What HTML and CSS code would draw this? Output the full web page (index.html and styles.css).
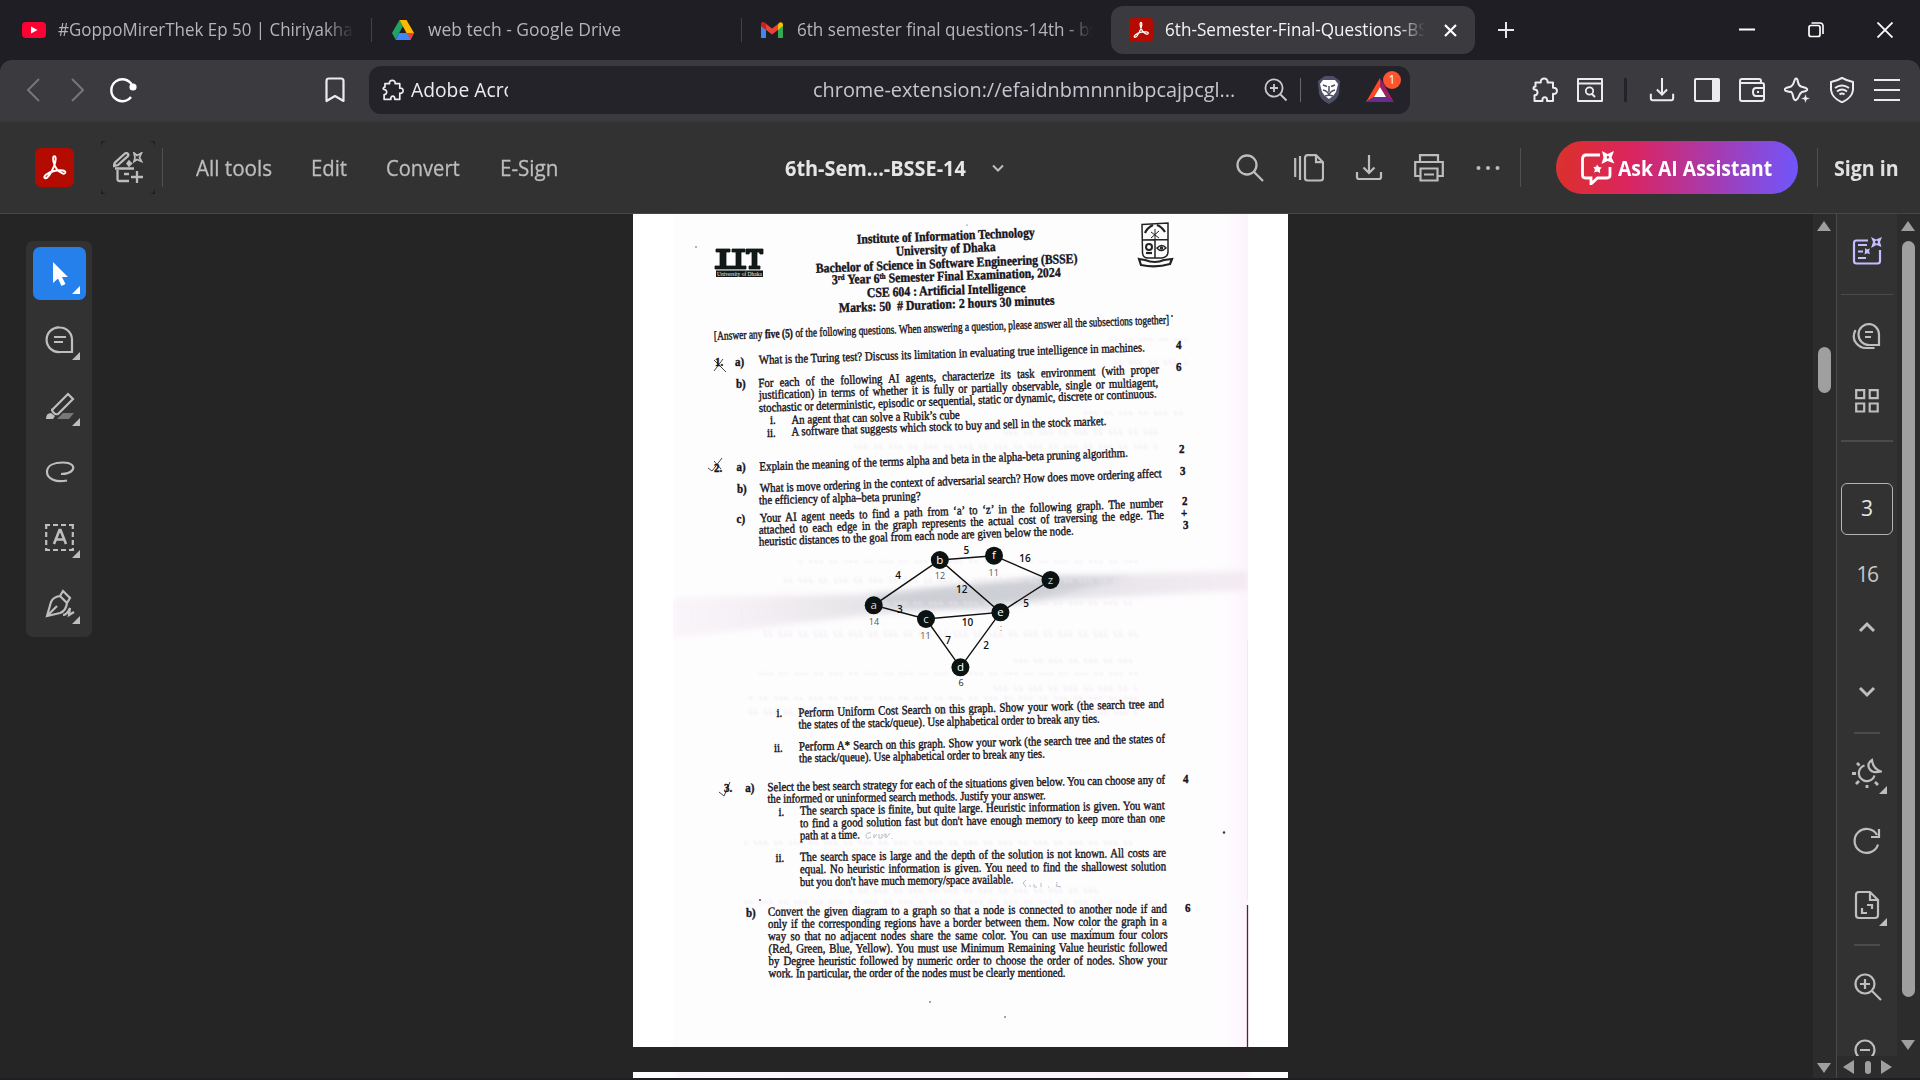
FILE: index.html
```html
<!DOCTYPE html>
<html lang="en">
<head>
<meta charset="utf-8">
<title>6th-Semester-Final-Questions-BSSE-14</title>
<link rel="stylesheet" href="styles.css">
</head>
<body>
<svg class="defs" width="0" height="0">
  <symbol id="adobe" viewBox="0 0 24 24"><path d="M11.6 4.500c1.600-.6 1.600 3.200-.2 7.200-1.500 3.500-4.200 8-5.800 7.500-1.700-.8 1.700-4 6.800-5 3.900-.7 7.200-.3 6.900 1.200-.5 1.700-3.700.3-5.900-2.500-2-2.600-3-7.700-1.800-8.400z" fill="none" stroke="#fff" stroke-width="1.300"/></symbol>
  <symbol id="puzzle" viewBox="0 0 26 26"><path d="M3.500 5.500h5.300C7.800.3 16.500.3 15.500 5.500H21v5.300c5.300-1 5.300 7 0 6V24h-6c1-5-5.500-5-4.500 0H2.500v-5.700c4 .5 4-6.300 0-5.800-1.500 0-1.500-3 1-3z" fill="none" stroke="currentColor" stroke-width="2" stroke-linejoin="round"/></symbol>
  <symbol id="download" viewBox="0 0 28 28"><path d="M14 1v18M8.500 13.500l5.500 5.500 5.500-5.500M2 18v5q0 2 2 2h20q2 0 2-2v-5" fill="none" stroke="currentColor" stroke-width="2.200"/></symbol>
</svg>

<header class="tabs">
  <div class="tab t1">
    <svg width="24" height="16" viewBox="0 0 24 16"><rect width="24" height="16" rx="4" fill="#ff0033"/><path d="M9 4.500v7l6.500-3.500z" fill="#fff"/></svg>
    <span class="clip c1 fade"><span class="fit" data-w="305">#GoppoMirerThek Ep 50 | Chiriyakhan</span></span>
  </div>
  <div class="tab t2">
    <svg width="22" height="20" viewBox="0 0 22 20"><path d="M7.500 0L0 13l3.500 6.500L11 6z" fill="#1fa463"/><path d="M7.500 0h7L22 13h-7.500z" fill="#ffba00"/><path d="M3.500 20L7 13h15l-3.500 7z" fill="#4285f4"/><path d="M14.800 13H22l-3.500 6.500z" fill="#ea4335"/></svg>
    <span class="clip c2"><span class="fit" data-w="193">web tech - Google Drive</span></span>
  </div>
  <div class="tab t3">
    <svg width="22" height="16" viewBox="0 0 22 16"><path d="M0 2v14h5V6z" fill="#4285f4"/><path d="M22 2v14h-5V6z" fill="#34a853"/><path d="M17 2.500V8l5-4V2q-1-3-4-1.200z" fill="#fbbc04"/><path d="M0 2v2l11 8.500L17 8V2l-6 4.500L4 1Q1-1 0 2z" fill="#ea4335"/><path d="M0 2v2l5 4V2Q1-2 0 2z" fill="#c5221f"/></svg>
    <span class="clip c1 fade"><span class="fit" data-w="318">6th semester final questions-14th - bsse</span></span>
  </div>
  <div class="tab t4">
    <svg class="red" width="24" height="24"><use href="#adobe"/></svg>
    <span class="clip c4 fade"><span class="fit" data-w="272">6th-Semester-Final-Questions-BSS</span></span>
    <svg width="13" height="13" viewBox="0 0 13 13"><path d="M1 1l11 11M12 1L1 12" stroke="#fff" stroke-width="2.200"/></svg>
  </div>
  <svg class="plus" width="16" height="16" viewBox="0 0 16 16"><path d="M8 0v16M0 8h16" stroke="#e8e8ea" stroke-width="2"/></svg>
  <div class="winctl">
    <svg width="16" height="16" viewBox="0 0 16 16"><path d="M0 7.500h16" stroke="#fff" stroke-width="2"/></svg>
    <svg width="16" height="16" viewBox="0 0 16 16"><rect x="1" y="3.500" width="11" height="11" rx="2" fill="none" stroke="#fff" stroke-width="1.700"/><path d="M3.500 1H12q3 0 3 3v8" fill="none" stroke="#fff" stroke-width="1.600"/></svg>
    <svg width="16" height="16" viewBox="0 0 16 16"><path d="M.5.5l15 15M15.500.5l-15 15" stroke="#fff" stroke-width="1.800"/></svg>
  </div>
</header>

<nav class="toolbar">
  <svg class="back" width="14" height="24" viewBox="0 0 14 24"><path d="M13 1L2 12l11 11" fill="none" stroke="#77767b" stroke-width="2"/></svg>
  <svg class="fwd" width="14" height="24" viewBox="0 0 14 24"><path d="M1 1l11 11L1 23" fill="none" stroke="#77767b" stroke-width="2"/></svg>
  <svg class="reload" width="28" height="26" viewBox="0 0 28 26"><path d="M22 20A11 11 0 1 1 23 8" fill="none" stroke="#fff" stroke-width="2.400"/><circle cx="24" cy="10" r="3.600" fill="#fff"/></svg>
  <svg class="mark" width="20" height="26" viewBox="0 0 20 26"><path d="M1.500 4q0-2.500 2.500-2.500h12q2.500 0 2.500 2.500v20L10 19l-8.500 5z" fill="none" stroke="#ececf0" stroke-width="2.200" stroke-linejoin="round"/></svg>
  <div class="url">
    <svg class="lt" width="22" height="22"><use href="#puzzle"/></svg>
    <span class="clip acr"><span class="fit" data-w="134">Adobe Acrobat</span></span>
    <span class="clip addr"><span class="fit" data-w="422">chrome-extension://efaidnbmnnnibpcajpcgl...</span></span>
    <svg class="mag" width="24" height="24" viewBox="0 0 24 24"><circle cx="10" cy="10" r="8.600" fill="none" stroke="#c9c9cf" stroke-width="1.800"/><path d="M10 6v8M6 10h8M16.500 16.500l6 6" stroke="#c9c9cf" stroke-width="1.800"/></svg>
    <i class="usep"></i>
    <svg class="lion" width="24" height="28" viewBox="0 0 24 28"><path d="M5 2l3-2h8l3 2 4 3-1 13q-2 6-10 10Q4 24 2 18L1 5z" fill="#4c4f66"/><path d="M6 4h12l3 4-2 8-3 4-4 3-4-3-3-4-2-8z" fill="#fff"/><path d="M6 9l4 1.500M18 9l-4 1.500M12 10v6M9 15l3 3 3-3M8 20l4-1 4 1M6 14l3 1M18 14l-3 1" fill="none" stroke="#4c4f66" stroke-width="1.500"/></svg>
    <div class="bat">
      <svg width="28" height="24" viewBox="0 0 28 24"><path d="M14 0v9L8 19 0 24z" fill="#ff4724"/><path d="M14 0l14 24-8-5-6-10z" fill="#9e1f63"/><path d="M0 24l8-5h12l8 5z" fill="#662d91"/><path d="M14 9l6 10H8z" fill="#fff"/></svg>
      <b>1</b>
    </div>
  </div>
  <div class="tools">
    <svg class="t26" viewBox="0 0 26 26"><use href="#puzzle"/></svg>
    <svg class="t26" viewBox="0 0 26 26"><path d="M1 2h24v22H1zM1 6.500h24" fill="none" stroke="currentColor" stroke-width="2" stroke-linejoin="round"/><circle cx="12.500" cy="14" r="3.700" fill="none" stroke="currentColor" stroke-width="1.800"/><path d="M15 17l3 3" stroke="currentColor" stroke-width="2"/></svg>
    <i class="tsep"></i>
    <svg class="t26" viewBox="0 0 28 28"><use href="#download"/></svg>
    <svg class="t26" viewBox="0 0 26 26"><rect x="1" y="2" width="24" height="22" rx="1" fill="none" stroke="currentColor" stroke-width="2"/><path d="M18 2h7v22h-7z" fill="currentColor"/></svg>
    <svg class="t26" viewBox="0 0 26 26"><path d="M22 6V4q0-2-2-2H3q-2 0-2 2v18q0 2 2 2h20q2 0 2-2V8q0-2-2-2H2M25 11h-8q-3 0-3 4t3 4h8M18 15h2" fill="none" stroke="currentColor" stroke-width="2"/></svg>
    <svg class="t26" viewBox="0 0 26 26"><path d="M12 1.500q1.500 0 2 3.500t3 4.500l5 1.500q2.500 1.500 0 3l-4 1q-2 1-3 4t-3 4-3-4-3-4l-4-1q-2.500-1.500 0-3l5-1.500q2-1 3-4.500t2-3.500z" fill="none" stroke="currentColor" stroke-width="2" stroke-linejoin="round"/><path d="M21.500 16.500l1.300 3.700 3.700 1.300-3.700 1.300-1.300 3.700-1.300-3.700-3.700-1.300 3.700-1.300z" fill="currentColor" stroke="#3b3a3f" stroke-width=".6"/></svg>
    <svg class="t26" viewBox="0 0 26 26"><path d="M13 .8q4 2.500 11 4.200v8q-1 8-11 12.300Q3 21 2 13V5Q9 3.500 13 .8z" fill="none" stroke="currentColor" stroke-width="2"/><path d="M6 11q7-5 14 0M8 14.500q5-4 10 0M10.500 17.500q2.500-2 5 0" fill="none" stroke="currentColor" stroke-width="1.900"/></svg>
    <svg class="t26" viewBox="0 0 26 26"><path d="M0 3h26M0 13h26M0 23h26" stroke="currentColor" stroke-width="2"/></svg>
  </div>
</nav>

<div class="acrobar">
  <svg class="logo" width="39" height="39" viewBox="0 0 24 24"><use href="#adobe" x="1" y="1" width="22" height="22"/></svg>
  <div class="newwrap"><div class="newbtn"><svg width="30" height="31" viewBox="0 0 30 31" fill="none" stroke="currentColor" stroke-width="2.300"><path d="M1 14q0-3 2-4.500L12 1.500q2-1 3 .5t-1 3L5 13l-4 1zM2 16.500h19M4.500 18v9q0 2 2 2H16M11 22h5M24 19v12M18 25h12"/><path d="M21 1l3 2.500L28.500 1l-2 4.500 2 4-4.500-2-3 2 1-4z" stroke-width="1.700"/><path d="M16 9.500l2 2-2 2-1.500-2z" fill="currentColor"/></svg></div></div>
  <i class="asep s1"></i>
  <span class="clip m1"><span class="fit" data-w="76">All tools</span></span>
  <span class="clip m2"><span class="fit" data-w="36">Edit</span></span>
  <span class="clip m3"><span class="fit" data-w="74">Convert</span></span>
  <span class="clip m4"><span class="fit" data-w="58">E-Sign</span></span>
  <span class="clip m5"><span class="fit" data-w="181">6th-Sem...-BSSE-14</span></span>
  <svg class="chev" width="12" height="8" viewBox="0 0 12 8"><path d="M1 1.500l5 5 5-5" fill="none" stroke="currentColor" stroke-width="2"/></svg>
  <div class="acts">
    <svg width="28" height="28" viewBox="0 0 28 28" fill="none" stroke="currentColor" stroke-width="2.300"><circle cx="11" cy="11" r="9.500"/><path d="M18 18l9 9"/></svg>
    <svg width="30" height="28" viewBox="0 0 30 28" fill="none" stroke="currentColor" stroke-width="2.200"><path d="M1.200 4v19M6 2v24M13.500 1.200H22l7 7V24q0 2.500-2.500 2.500h-13Q11 26.500 11 24V4q0-2.800 2.500-2.800zM22 1.200v7h7"/></svg>
    <svg width="28" height="28"><use href="#download"/></svg>
    <svg width="30" height="28" viewBox="0 0 30 28" fill="none" stroke="currentColor" stroke-width="2.200"><path d="M6 7V1.200h18V7M6 22H1.200V8h27.600v14H24M6.500 14.500h17v12h-17zM10 20.500h10"/></svg>
    <svg width="24" height="6" viewBox="0 0 24 6" fill="currentColor"><circle cx="2.500" cy="3" r="2"/><circle cx="12" cy="3" r="2"/><circle cx="21.500" cy="3" r="2"/></svg>
  </div>
  <i class="asep s2"></i>
  <div class="ai">
    <svg width="34" height="34" viewBox="0 0 34 34"><path d="M19 4H5Q1.500 4 1.500 8v16q0 3 3 3H10v6l6.500-6H26q3 0 3-3V16" fill="none" stroke="#fff" stroke-width="2.800"/><path d="M21 0l5.500 3L33 0l-2.500 6.500 3 6-7-2.500-6 3 2-6.500z" fill="#fff"/><path d="M27 4.500l1.500 2-2 1.500-1-2z" fill="#d8316b"/><path d="M16 13.500l1.800 2.500 3 .5-2 2.200.3 3.300-3-1.500-3 1 .8-3-1.500-2.500 2.800-.3z" fill="#fff"/></svg>
    <span class="clip m6"><span class="fit" data-w="154">Ask AI Assistant</span></span>
  </div>
  <i class="asep s3"></i>
  <span class="clip m7"><span class="fit" data-w="65">Sign in</span></span>
</div>

<main class="viewer">
  <aside class="palette">
    <div class="pt on"><svg width="30" height="30" viewBox="0 0 30 30"><path d="M8 3v21l5-4.500 3.500 7.500 4-2-3.500-7h6z" fill="#fff"/></svg><i></i></div>
    <div class="pt"><svg width="30" height="30" viewBox="0 0 30 30"><path d="M15 2.500A12.300 12.300 0 1 0 15 27h12V15A12.300 12.300 0 0 0 15 2.500zM9 12h12M9 17h9"/></svg><i></i></div>
    <div class="pt"><svg width="30" height="30" viewBox="0 0 30 30"><path d="M8 18L23 3l5 5-15 15q-3 1-5-2t0-3z"/><path d="M1 28q0-6 5-6l4 3-2 3z" fill="currentColor" stroke="none"/><path d="M12 28l6-6h11l-5 6z" fill="#777" stroke="none"/></svg><i></i></div>
    <div class="pt no"><svg width="30" height="30" viewBox="0 0 30 30"><path d="M22 23.500C10 26 2 21 2 15 2 8 10 5.500 18 5.500S30 9 27.500 13q-3 4-11.500 4"/></svg></div>
    <div class="pt"><svg width="30" height="30" viewBox="0 0 30 30"><path d="M0 2h29M0 27h29" stroke-dasharray="5 3"/><path d="M1.200 1v27M27.800 1v27" stroke-dasharray="5 3"/><path d="M9 21l5.500-14h1L21 21M11 16.500h8" stroke-width="2.600"/></svg><i></i></div>
    <div class="pt"><svg width="30" height="30" viewBox="0 0 30 30"><path d="M18 2l7 7-3 5q-1 8-7 10L2 27l4-14q2-5 9-6zM15 7l7 7M2 27l10-10M18 26q4 0 7-7l-1 7 5-3"/></svg><i></i></div>
  </aside>

  <div class="pages">
    <svg class="page" id="paper" width="655" height="833" viewBox="633 214 655 833">
      <defs>
        <linearGradient id="band" x1="0" x2="1" y1="0" y2="0"><stop offset="0" stop-color="#f3e8f3" stop-opacity=".6"/><stop offset=".3" stop-color="#dedae0"/><stop offset=".45" stop-color="#cccdd4"/><stop offset=".65" stop-color="#d3d3da"/><stop offset="1" stop-color="#ebdfe9" stop-opacity=".8"/></linearGradient>
        <linearGradient id="edge" x1="0" x2="1" y1="0" y2="0"><stop offset="0" stop-color="#fdf8fd" stop-opacity="0"/><stop offset="1" stop-color="#fcf4fb"/></linearGradient>
        <filter id="soft" x="-10%" y="-30%" width="120%" height="160%"><feGaussianBlur stdDeviation="3"/></filter>
        <filter id="haze" x="-5%" y="-5%" width="110%" height="110%"><feGaussianBlur stdDeviation=".8"/></filter>
        <clipPath id="scan"><rect x="673" y="214" width="575" height="833"/></clipPath>
      </defs>
      <rect x="673" y="214" width="575" height="833" fill="#fefdfe"/>
      <g clip-path="url(#scan)">
        <rect x="1218" y="214" width="30" height="833" fill="url(#edge)"/>
        <path d="M673 598L860 594 1050 576 1248 571V590L1020 602 860 616 673 638z" fill="url(#band)" opacity=".65" filter="url(#soft)"/>
        <path d="M870 596L1050 577 1130 578 1050 596 990 610 880 606z" fill="#b9bdc5" opacity=".45" filter="url(#soft)"/>
        <path d="M690 1043h558" stroke="#faeff9" stroke-width="8" filter="url(#soft)"/>
      </g>
      <g id="ghost" filter="url(#haze)"></g>
      <path d="M1247.500 640V900" stroke="#f6e6f2"/><path d="M1247.500 905V1047" stroke="#6a1a30" stroke-width="1.300"/>
      <g fill="#101818"><path d="M716 249h14v3h-4v14h5v3h-16v-3h5v-14h-4zM732 249h13v3h-4v14h5v3h-15v-3h5v-14h-4zM746 249h17v5h-3l-1-2h-2v14h3v3h-11v-3h3v-14h-2l-1 2h-3z" stroke="#101818" stroke-width=".8"/><rect x="716" y="270.500" width="47" height="6.500"/></g>
      <text x="717" y="276" font-size="6" fill="#eee" textLength="45" lengthAdjust="spacingAndGlyphs">University of Dhaka</text>
      <g fill="none" stroke="#222" stroke-width="1.500"><path d="M1142 224.500l26-1.500v29q0 5-6 6h-14q-5 0-5.500-5zM1142 240l26-.5M1155 240v18"/><path d="M1145 233q2-5 8-8M1165 232q-3-5-8-7" stroke-width="2.200"/><path d="M1155 229v11M1151 232l8 6M1159 231l-8 7" stroke-width="1"/><circle cx="1149" cy="247" r="3" stroke-width="2"/><path d="M1146 253h6" stroke-width="2.200"/><path d="M1157 248q5-5 9 0-5 5-9 0z"/><circle cx="1161.500" cy="248" r="1"/><path d="M1139 259l6 1q10 4 19 0l8-1-2 5q-14 4-29 1z" stroke-width="2.200"/></g>
      <g stroke="#111" stroke-width="1.400"><path d="M939.800 560L994 555.700 1050.500 580 1000.400 612.300 939.800 560 873.700 605.300 926 619 1000.400 612.300 960.400 667.300 926 619" fill="none"/></g>
      <g fill="#0a1212"><circle cx="939.800" cy="560" r="9"/><circle cx="994" cy="555.700" r="9"/><circle cx="1050.500" cy="580" r="9"/><circle cx="873.700" cy="605.300" r="9"/><circle cx="926" cy="619" r="9"/><circle cx="1000.400" cy="612.300" r="9"/><circle cx="960.400" cy="667.300" r="9"/></g>
      <g class="glabel" id="glabels"></g>
      <g fill="none" stroke="#444" stroke-width="1"><path d="M714 371l9-12M714 360l12 12M708 468l4 3 10-13M714 461l7 8M719 792l5 4 6-14"/></g>
      <g fill="none" stroke="#b4bcc6" stroke-width="1"><path d="M871 833q-5-1-5 3t5 1M874 834v4l3-4M879 834v4h3v-4M885 837q-3-3 1-3v4l4-5M892 838v1M1026 880l-3 3 3 4M1030 885v2M1034 884v3h3M1041 883v4M1048 887h1M1056 882q3 1 0 4l5 1"/></g>
      <g fill="#333"><circle cx="1172" cy="316" r="1"/><circle cx="1224" cy="832.500" r="1.200"/><circle cx="930" cy="1002" r=".8"/><circle cx="1005" cy="1017" r=".8"/><circle cx="760" cy="900" r=".9"/><circle cx="1092" cy="929" r=".8"/><circle cx="696" cy="247" r=".7"/><circle cx="967" cy="225" r=".6"/></g>
      <g id="lines"></g>
    </svg>
    <div class="next"></div>
  </div>

  <div class="vbar">
    <i class="up"></i><i class="thumb short"></i><i class="down low"></i>
  </div>

  <div class="railcol">
    <aside class="rail">
      <svg class="r1" width="30" height="30" viewBox="0 0 30 30"><path d="M16 4.500H4.500Q2 4.500 2 7v18q0 2.500 2.500 2.500h21Q28 27.500 28 25V14"/><path d="M6 9h9M6 15.500h5M6 22h8"/><path d="M19 1l5 2.500L30 1l-2 5 1.500 5-5-2-5.500 3 2-6zM13 12l2 1.500 3-1-1 2.500 1 3-3-.8-2.500 1.300.5-3z" fill="currentColor" stroke="none"/><circle cx="24.500" cy="6" r="1.500" fill="#323232" stroke="none"/></svg>
      <hr class="thin">
      <svg class="r2" width="30" height="30" viewBox="0 0 30 30"><path d="M17 3a10.500 10.500 0 0 0 0 21h10V13.500A10.500 10.500 0 0 0 17 3zM13 11h8M13 16h6M3.500 9q-4 8 1 13.500 4 4.500 9 4.500h9"/></svg>
      <svg class="r3" width="30" height="30" viewBox="0 0 30 30"><path d="M4.200 4.200h8v8h-8zM17.700 4.200h8v8h-8zM4.200 17.500h8v8h-8zM17.700 17.500h8v8h-8z"/></svg>
      <hr class="thick">
      <div class="pgbox">3</div>
      <div class="pgtot">16</div>
      <svg class="r4" width="18" height="12" viewBox="0 0 18 12"><path d="M2 10l7-7 7 7" stroke-width="3"/></svg>
      <svg class="r5" width="18" height="12" viewBox="0 0 18 12"><path d="M2 2l7 7 7-7" stroke-width="3"/></svg>
      <hr class="sm">
      <div class="rb r6"><svg width="30" height="30" viewBox="0 0 30 30"><path d="M12.500 7.500a8 8 0 1 0 10 10M20 2q-5 3-3 8 3 6 12 3.500Q21 11 20 2z"/><path d="M0 15.500h4M15 27v3M5 5l2.500 2.500M4 26l3-3M23 24l3 3" stroke-width="2.800"/></svg><i></i></div>
      <svg class="r7" width="30" height="30" viewBox="0 0 30 30"><path d="M26 18.500A12 12 0 1 1 25 9M27 3v8h-8"/></svg>
      <div class="rb r8"><svg width="30" height="30" viewBox="0 0 30 30"><path d="M7 2h11l8 8v15q0 3-3 3H7q-3 0-3-3V5q0-3 3-3zM18 2v8h8M15 15h5v4M10 18v5h5"/></svg><i></i></div>
      <hr class="sm s9">
      <svg class="r9" width="30" height="30" viewBox="0 0 30 30"><circle cx="13" cy="12" r="9.500"/><path d="M13 7v10M8 12h10M20 19l9 9"/></svg>
      <svg class="r10" width="30" height="30" viewBox="0 0 30 30"><circle cx="13" cy="12" r="9.500"/><path d="M8 12h10M20 19l9 9"/></svg>
    </aside>
    <div class="hbar"><i class="lft"></i><i class="dot"></i><i class="rgt"></i></div>
  </div>

  <div class="vbar outer">
    <i class="up"></i><i class="thumb long"></i><i class="down"></i>
  </div>
</main>
<script src="app.js"></script>
</body>
</html>
```
FILE: styles.css
```css
* { box-sizing: border-box; }
body { margin: 0; width: 1920px; height: 1080px; overflow: hidden; background: #1f1e24; font-family: "Open Sans", "Noto Sans", sans-serif; color: #c4c4c4; }
svg { display: block; flex: none; }
.defs { position: absolute; }
.fit { display: inline-block; white-space: nowrap; transform-origin: 0 50%; }
.clip { display: block; overflow: hidden; white-space: nowrap; flex: none; margin-bottom: 2px; }

/* tab strip */
.tabs { display: flex; align-items: center; height: 60px; background: #1f1e24; font-size: 18px; line-height: 26px; color: #b5b5b8; }
.tab { display: flex; align-items: center; height: 24px; flex: none; }
.tab svg { margin-right: 12px; }
.t1 { width: 371px; padding-left: 22px; }
.t2 { width: 370px; padding-left: 20px; border-left: 1px solid #434248; }
.t3 { width: 370px; padding-left: 19px; border-left: 1px solid #434248; }
.t2 svg, .t3 svg { margin-right: 14px; }
.t4 { width: 364px; height: 48px; padding-left: 18px; border-radius: 12px; background: #3b3a3f; color: #f4f4f6; }
.t4 .red { background: #b30b00; border-radius: 4px; }
.c1 { width: 296px; }
.c2 { width: 200px; }
.c4 { width: 260px; margin-right: 19px; }
.fade { -webkit-mask-image: linear-gradient(90deg, #000 90%, transparent); mask-image: linear-gradient(90deg, #000 90%, transparent); }
.plus { margin-left: 23px; }
.winctl { display: flex; gap: 53px; margin-left: auto; padding-right: 27px; }

/* browser toolbar */
.toolbar { display: flex; align-items: center; height: 60px; background: #3b3a3f; border-radius: 12px 12px 0 0; color: #ececf0; }
.back { margin-left: 26px; }
.fwd { margin-left: 31px; }
.reload { margin-left: 24px; }
.mark { margin-left: 188px; }
.url { display: flex; align-items: center; width: 1041px; height: 48px; margin-left: 24px; padding-left: 13px; border-radius: 12px; background: #24232a; font-size: 20px; line-height: 30px; }
.url .clip { margin-bottom: 0; }
.acr { width: 97px; margin-left: 7px; }
.addr { width: 423px; margin-left: 305px; color: #c6c6cc; }
.mag { margin-left: 28px; }
.usep { width: 1px; height: 24px; margin-left: 12px; background: #68676e; }
.lion { margin-left: 16px; }
.bat { position: relative; margin-left: 25px; }
.bat b { position: absolute; left: 17px; top: -7px; width: 18px; height: 18px; border-radius: 9px; background: #ff5430; color: #fff; font-size: 12px; font-weight: 400; line-height: 18px; text-align: center; }
.tools { display: flex; align-items: center; margin-left: 112px; }
.t26 { width: 26px; height: 26px; margin: 0 9.500px; }
.tsep { width: 3px; height: 24px; margin: 0 12px; background: #242329; }

/* Acrobat bar */
.acrobar { display: flex; align-items: center; height: 94px; background: #323232; border-top: 2px solid #3a393e; border-bottom: 1px solid #464646; font-size: 22px; line-height: 32px; color: #bdbdbd; }
.m1, .m2, .m3, .m4 { -webkit-text-stroke: .3px #bdbdbd; }
.logo { margin-left: 35px; background: #b30b00; border-radius: 6px; }
.newwrap { margin-left: 27px; background: #1e1e1e; }
.newbtn { display: flex; align-items: center; justify-content: center; width: 54px; height: 53px; background: #323232; border-radius: 6px; }
.asep { width: 1px; height: 39px; background: #505050; flex: none; }
.s1 { margin-left: 7px; }
.m1 { width: 78px; margin-left: 33px; }
.m2 { width: 38px; margin-left: 37px; }
.m3 { width: 76px; margin-left: 37px; }
.m4 { width: 60px; margin-left: 38px; }
.m5 { width: 183px; margin-left: 225px; color: #e6e6e6; font-weight: 700; }
.chev { margin-left: 24px; }
.acts { display: flex; align-items: center; gap: 31px; margin-left: 232px; }
.acts svg:nth-child(2) { margin-left: -1px; }
.acts svg:last-child { margin-left: 1px; }
.s2 { margin-left: 20px; }
.ai { display: flex; align-items: center; width: 242px; height: 53px; margin-left: 35px; padding-left: 25px; border-radius: 27px; background: linear-gradient(97deg, #d7373f 0, #db2f2f 4%, #da2561 32%, #a63bb0 65%, #7155fa 98%); color: #fff; font-weight: 700; }
.m6 { width: 156px; margin-left: 3px; }
.s3 { margin-left: 19px; }
.m7 { width: 67px; margin-left: 16px; color: #e0e0e0; font-weight: 700; }

/* viewer */
.viewer { display: flex; height: 864px; background: #252525; }
.palette { display: flex; flex-direction: column; gap: 13px; width: 66px; height: 396px; margin: 27px 0 0 26px; padding: 6px 7px; border-radius: 7px; background: #323232; flex: none; }
.pt { display: grid; place-items: center; position: relative; width: 53px; height: 53px; border-radius: 7px; color: #bebebe; flex: none; }
.pt svg, .rail svg { fill: none; stroke: currentColor; stroke-width: 2.200; }
.pt svg path[fill="#fff"] { stroke: none; }
.pt i, .rb i { position: absolute; right: 6px; bottom: 6px; border-left: 8px solid transparent; border-bottom: 8px solid currentColor; }
.on { background: #2680eb; color: #fff; }
.pages { width: 655px; margin-left: 541px; flex: none; }
.page { background: #fff; font-family: "Liberation Serif", serif; }
.next { height: 6px; margin-top: 25px; background: linear-gradient(90deg, #fff 6%, #fdf6fd 7%, #fcf3fb 93%, #fff 95%); }
#lines text { fill: #16131a; stroke: #16131a; stroke-width: .4px; }
.glabel { font-family: "Open Sans", sans-serif; text-anchor: middle; }
.vbar { position: relative; display: flex; flex-direction: column; align-items: center; width: 23px; margin-left: 525px; padding: 7px 1px 0 0; background: #2c2c2c; flex: none; }
.vbar i, .hbar i { flex: none; }
.up { border: 7.500px solid transparent; border-top: 0; border-bottom: 10px solid #9f9f9f; }
.down { border: 7.500px solid transparent; border-bottom: 0; border-top: 10px solid #9f9f9f; }
.thumb { width: 13px; border-radius: 7px; background: #9f9f9f; }
.short { height: 46px; margin-top: 116px; }
.low { margin-top: 670px; }
.long { height: 756px; margin: 10px 0 43px; }
.outer { margin-left: 0; }
.railcol { width: 61px; border-left: 1px solid #4a4a4a; flex: none; }
.rail { display: flex; flex-direction: column; align-items: center; height: 842px; overflow: hidden; background: #323232; color: #bebebe; }
.rail hr { margin: 0; border: 0; background: #4b4b4b; flex: none; }
.thin { width: 52px; height: 1px; }
.thick { width: 52px; height: 2px; }
.sm { width: 26px; height: 2px; }
.r1 { margin: 22px 0 28px; color: #c3bfff; }
.r2 { margin-top: 26px; }
.r3 { margin: 35px 0 24px; }
.pgbox { width: 52px; height: 52px; margin-top: 41px; border: 1px solid #b4b4b4; border-radius: 6px; color: #e6e6e6; font-size: 21px; line-height: 49px; text-align: center; flex: none; }
.pgtot { height: 30px; margin-top: 25px; font-size: 21px; line-height: 28px; letter-spacing: -1.500px; flex: none; color: #c8c8c8; }
.r4 { margin-top: 31px; }
.r5 { margin: 53px 0 34px; }
.rb { position: relative; width: 40px; padding-left: 5px; flex: none; }
.rb i { right: 0; bottom: -6px; }
.r6 { margin-top: 24px; }
.r7 { margin-top: 38px; }
.r8 { margin-top: 34px; }
.s9 { margin-top: 24px !important; }
.r9 { margin-top: 26px; }
.r10 { margin-top: 36px; }
.hbar { display: flex; align-items: center; height: 22px; padding: 0 5px 0 6px; justify-content: space-between; background: #2c2c2c; }
.lft { border: 7.500px solid transparent; border-left: 0; border-right: 11px solid #9f9f9f; }
.rgt { border: 7.500px solid transparent; border-right: 0; border-left: 11px solid #9f9f9f; }
.dot { width: 6px; height: 13px; border-radius: 3px; background: #9f9f9f; }
```
FILE: app.js
```js
document.querySelectorAll('.fit').forEach(function (el) {
  el.style.transform = 'scaleX(' + (el.dataset.w / el.offsetWidth) + ')';
});

var NS = 'http://www.w3.org/2000/svg';
var CONDENSE = 0.86;

// x0, y0, x1, y1, text, kind: B bold heading, J justified, otherwise plain
var lines = [
  [857, 243.7, 1035, 236.7, 'Institute of Information Technology', 'B'],
  [896, 255.7, 996, 251, 'University of Dhaka', 'B'],
  [816, 272.7, 1078, 262.7, 'Bachelor of Science in Software Engineering (BSSE)', 'B'],
  [832, 284.3, 1061, 276.7, '3<tspan font-size="8" dy="-4">rd</tspan><tspan dy="4"> Year 6</tspan><tspan font-size="8" dy="-4">th</tspan><tspan dy="4"> Semester Final Examination, 2024</tspan>', 'B'],
  [867, 297.2, 1026, 292.2, 'CSE 604 : Artificial Intelligence', 'B'],
  [839, 312.3, 1055, 304.7, 'Marks: 50 \u00a0# Duration: 2 hours 30 minutes', 'B'],
  [714, 340, 1170, 323.7, '[Answer any <tspan font-weight="bold">five (5)</tspan> of the following questions. When answering a question, please answer all the subsections together]'],
  [759, 364, 1145, 351.3, 'What is the Turing test? Discuss its limitation in evaluating true intelligence in machines.'],
  [758.5, 387.2, 1159, 373.2, 'For each of the following AI agents, characterize its task environment (with proper', 'J'],
  [759, 399, 1158, 386.5, 'justification) in terms of whether it is fully or partially observable, single or multiagent,', 'J'],
  [759, 412, 1157, 397.5, 'stochastic or deterministic, episodic or sequential, static or dynamic, discrete or continuous.'],
  [791.5, 423.9, 960, 418.8, 'An agent that can solve a Rubik’s cube'],
  [791.5, 435.7, 1106.7, 425, 'A software that suggests which stock to buy and sell in the stock market.'],
  [759.6, 470.7, 1128, 456.7, 'Explain the meaning of the terms alpha and beta in the alpha-beta pruning algorithm.'],
  [760, 492.3, 1162, 477.3, 'What is move ordering in the context of adversarial search? How does move ordering affect'],
  [759, 504.3, 921, 500, 'the efficiency of alpha–beta pruning?'],
  [760, 522.3, 1163, 507, 'Your AI agent needs to find a path from ‘a’ to ‘z’ in the following graph. The number', 'J'],
  [759, 534, 1164, 518.7, 'attached to each edge in the graph represents the actual cost of traversing the edge. The', 'J'],
  [759, 545.7, 1074, 534.7, 'heuristic distances to the goal from each node are given below the node.'],
  [798.4, 716.7, 1164, 707.7, 'Perform Uniform Cost Search on this graph. Show your work (the search tree and', 'J'],
  [798.4, 728.6, 1100, 722.6, 'the states of the stack/queue). Use alphabetical order to break any ties.'],
  [799, 750.6, 1165, 742.6, 'Perform A* Search on this graph. Show your work (the search tree and the states of', 'J'],
  [799, 762.3, 1045, 757.7, 'the stack/queue). Use alphabetical order to break any ties.'],
  [767.6, 791.3, 1165, 783.6, 'Select the best search strategy for each of the situations given below. You can choose any of', 'J'],
  [767.6, 802.8, 1046, 799.2, 'the informed or uninformed search methods. Justify your answer.'],
  [800, 814.7, 1164.5, 809.3, 'The search space is finite, but quite large. Heuristic information is given. You want', 'J'],
  [800, 827.3, 1165, 822, "to find a good solution fast but don't have enough memory to keep more than one", 'J'],
  [800, 839.5, 860, 838.5, 'path at a time.'],
  [800, 861, 1166, 856.7, 'The search space is large and the depth of the solution is not known. All costs are', 'J'],
  [800, 873.3, 1166, 870.3, 'equal. No heuristic information is given. You need to find the shallowest solution', 'J'],
  [800, 886, 1013.5, 883.3, "but you don't have much memory/space available."],
  [768, 915.7, 1166.7, 912.7, 'Convert the given diagram to a graph so that a node is connected to another node if and', 'J'],
  [768, 927.9, 1166.7, 925.2, 'only if the corresponding regions have a border between them. Now color the graph in a', 'J'],
  [768, 940.3, 1167.5, 938.5, 'way so that no adjacent nodes share the same color. You can use maximum four colors', 'J'],
  [768.6, 952.7, 1167, 951.3, '(Red, Green, Blue, Yellow). You must use Minimum Remaining Value heuristic followed', 'J'],
  [768.6, 965, 1167, 964.3, 'by Degree heuristic followed by numeric order to choose the order of nodes. Show your', 'J'],
  [768.6, 977.3, 1065.6, 976.7, 'work. In particular, the order of the nodes must be clearly mentioned.']
];

// x, baseline, text, font weight
var marks = [
  [715, 366, '1.', 700], [735, 366, 'a)', 700], [1176, 349, '4', 700], [736, 388, 'b)', 700], [1176, 371, '6', 700],
  [770, 424, 'i.', 400], [767, 436.7, 'ii.', 400],
  [714, 471.5, '2.', 700], [736.5, 471, 'a)', 700], [1179, 453, '2', 700], [737, 493, 'b)', 700], [1180, 475, '3', 700],
  [736.5, 523, 'c)', 700], [1182, 505, '2', 700], [1181, 517, '+', 700], [1183, 529, '3', 700],
  [776.5, 717.3, 'i.', 400], [774, 751.7, 'ii.', 400],
  [724, 792, '3.', 700], [745.3, 792, 'a)', 700], [1183, 783, '4', 700], [778.5, 816, 'i.', 400], [775.5, 862.3, 'ii.', 400],
  [746, 917, 'b)', 700], [1185, 912, '6', 700]
];

function add(parent, markup, attrs) {
  var t = document.createElementNS(NS, 'text');
  for (var k in attrs) t.setAttribute(k, attrs[k]);
  t.innerHTML = markup;
  parent.appendChild(t);
  return t;
}

var layer = document.getElementById('lines');
lines.forEach(function (l) {
  var dx = l[2] - l[0], dy = l[3] - l[1];
  var len = Math.sqrt(dx * dx + dy * dy), angle = Math.atan2(dy, dx) * 180 / Math.PI;
  var t = add(layer, l[4], { 'font-size': l[5] === 'B' ? 13.5 : 12.6 });
  if (l[5] === 'B') t.setAttribute('font-weight', 'bold');
  var natural = t.getComputedTextLength(), k = len / natural;
  if (l[5] === 'J') {
    var spaces = l[4].split(' ').length - 1;
    k = Math.min(CONDENSE, len / (natural - spaces * 0.5));
    t.style.wordSpacing = ((len / k - natural) / spaces) + 'px';
  }
  t.setAttribute('transform', 'translate(' + l[0] + ' ' + l[1] + ') rotate(' + angle + ') scale(' + k + ' 1)');
});
marks.forEach(function (m) {
  add(layer, m[2], { 'font-size': 12.5, 'font-weight': m[3], transform: 'translate(' + m[0] + ' ' + m[1] + ') scale(.88 1)' });
});

// Graph labels: centre x, centre y, text, colour
var g = document.getElementById('glabels');
[
  [939.8, 560, 'b', '#fff'], [994, 555.7, 'f', '#fff'], [1050.5, 580, 'z', '#ccc'], [873.7, 605.3, 'a', '#ddd'],
  [926, 619, 'c', '#ddd'], [1000.4, 612.3, 'e', '#fff'], [960.4, 667.3, 'd', '#fff'],
  [898, 575.7, '4', '#111'], [966.3, 550, '5', '#111'], [1025, 558.3, '16', '#111'], [961.7, 589, '12', '#111'],
  [940, 575.7, '12', '#555'], [993.7, 572.3, '11', '#555'], [899.8, 609, '3', '#111'], [874, 621, '14', '#555'],
  [1026, 603, '5', '#111'], [967.5, 622.7, '10', '#111'], [925.5, 635, '11', '#555'], [948, 640.7, '7', '#111'],
  [986, 645.3, '2', '#111'], [1001, 627, ':', '#777'], [961, 682.3, '6', '#222']
].forEach(function (n) {
  var node = /[a-z]/.test(n[2]);
  add(g, n[2], { x: n[0], y: n[1] + 3.5, 'font-size': node ? 11.5 : n[3] === '#111' ? 10 : 9, fill: n[3], 'font-weight': n[3] === '#111' ? 600 : 400 });
});

// Show-through from the reverse side of the sheet
var ghost = document.getElementById('ghost');
var rows = [[1110, 338, 80], [1110, 362, 80], [1080, 412, 110], [1000, 432, 160], [850, 446, 310], [800, 560, 340], [780, 580, 360],
  [800, 602, 340], [760, 634, 380], [1010, 660, 130], [760, 672, 380], [990, 688, 150], [750, 697, 390], [745, 712, 395],
  [745, 842, 390], [820, 856, 310], [850, 890, 250], [740, 901, 420]];
rows.forEach(function (r, i) {
  var d = '';
  for (var x = r[0]; x < r[0] + r[2]; x += 5) {
    var h = (x * 7 + i * 13) % 5;
    if ((x + i * 3) % 7 > 1) d += 'M' + x + ' ' + (r[1] - h) + 'v' + (2 + h) + 'h3';
  }
  var p = document.createElementNS(NS, 'path');
  p.setAttribute('d', d);
  p.setAttribute('fill', 'none');
  p.setAttribute('stroke', '#ece6ee');
  ghost.appendChild(p);
});
```
